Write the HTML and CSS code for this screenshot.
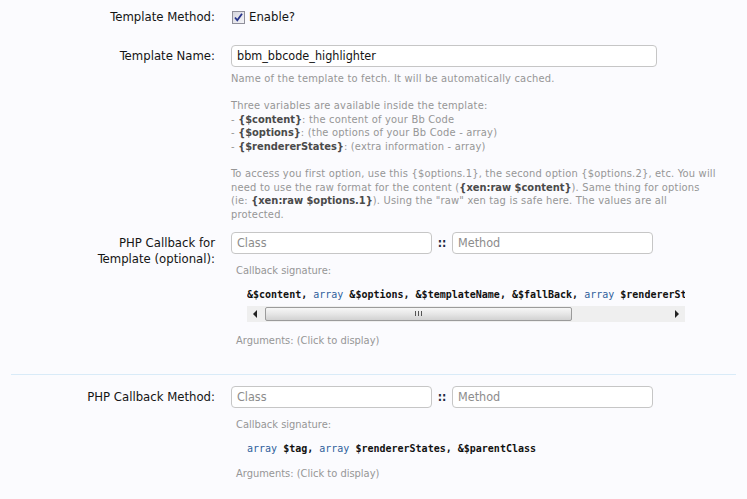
FILE: index.html
```html
<!DOCTYPE html>
<html>
<head>
<meta charset="utf-8">
<link rel="stylesheet" href="styles.css">
</head>
<body>
<form class="form">
  <div class="row row-first">
    <div class="label">Template Method:</div>
    <div class="ctrl">
      <label class="check">
        <span class="box"><svg width="11" height="11" viewBox="0 0 11 11"><path d="M2 5.5 L4.3 8.3 L9 1.8" fill="none" stroke="#27348b" stroke-width="1.8"/></svg></span>
        <span>Enable?</span>
      </label>
    </div>
  </div>

  <div class="row">
    <div class="label pad">Template Name:</div>
    <div class="ctrl">
      <div class="input wide">bbm_bbcode_highlighter</div>
      <p class="help">Name of the template to fetch. It will be automatically cached.<br>
      <br>
      Three variables are available inside the template:<br>
      - <b>{$content}</b>: the content of your Bb Code<br>
      - <b>{$options}</b>: (the options of your Bb Code - array)<br>
      - <b>{$rendererStates}</b>: (extra information - array)<br>
      <br>
      To access you first option, use this {$options.1}, the second option {$options.2}, etc. You will<br>
      need to use the raw format for the content (<b>{xen:raw $content}</b>). Same thing for options<br>
      (ie: <b>{xen:raw $options.1}</b>). Using the "raw" xen tag is safe here. The values are all<br>
      protected.</p>
    </div>
  </div>

  <div class="row row-cb">
    <div class="label pad">PHP Callback for<br>Template (optional):</div>
    <div class="ctrl">
      <div class="pair">
        <div class="input half ph">Class</div>
        <span class="sep">::</span>
        <div class="input half ph">Method</div>
      </div>
      <div class="sig">Callback signature:</div>
      <div class="code scroll"><span class="line">&amp;$content, <span class="kw">array</span> &amp;$options, &amp;$templateName, &amp;$fallBack, <span class="kw">array</span> $rendererStates</span></div>
      <div class="sbar">
        <span class="arr left"></span>
        <span class="thumb"><span class="grip"></span></span>
        <span class="arr right"></span>
      </div>
      <div class="args after-bar">Arguments: (Click to display)</div>
    </div>
  </div>

  <hr class="divider">

  <div class="row row-last">
    <div class="label pad">PHP Callback Method:</div>
    <div class="ctrl">
      <div class="pair">
        <div class="input half ph">Class</div>
        <span class="sep">::</span>
        <div class="input half ph">Method</div>
      </div>
      <div class="sig">Callback signature:</div>
      <div class="code"><span class="line"><span class="kw">array</span> $tag, <span class="kw">array</span> $rendererStates, &amp;$parentClass</span></div>
      <div class="args">Arguments: (Click to display)</div>
    </div>
  </div>
</form>
</body>
</html>
```

FILE: styles.css
```css
html, body {
  margin: 0;
  padding: 0;
  background: #fbfbfe;
}
body {
  font-family: "DejaVu Sans Condensed", "DejaVu Sans", sans-serif;
  font-size: 13px;
  color: #141414;
  width: 747px;
  height: 499px;
  overflow: hidden;
}
.form {
  margin: 0;
  padding: 0;
}
.row {
  display: flex;
  margin-top: 20px;
}
.row-first {
  margin-top: 9px;
}
.row-cb {
  margin-top: 10px;
}
.row-last {
  margin-top: 11px;
}
.label {
  width: 215px;
  flex: none;
  text-align: right;
  line-height: 16px;
  padding-right: 16px;
  box-sizing: content-box;
}
.label.pad {
  padding-top: 3px;
}
.ctrl {
  flex: 1;
  min-width: 0;
}
.check {
  display: flex;
  align-items: center;
  gap: 4px;
  line-height: 16px;
  padding-left: 1px;
}
.box {
  width: 11px;
  height: 11px;
  border: 1px solid #8f8f9a;
  background: linear-gradient(135deg, #d6d6de, #f4f4f7);
  display: flex;
  align-items: center;
  justify-content: center;
}
.box svg {
  display: block;
}
.input {
  height: 20px;
  border: 1px solid #c6c6c6;
  border-radius: 4px;
  background: #fff;
  line-height: 20px;
  padding: 0 5px;
  box-sizing: content-box;
  color: #141414;
  white-space: nowrap;
  font-size: 12.5px;
}
.input.wide {
  width: 414px;
}
.input.half {
  width: 189px;
}
.input.ph {
  color: #8c8c8c;
}
.pair {
  display: flex;
  align-items: center;
}
.sep {
  width: 20px;
  text-align: center;
  font-weight: bold;
  color: #1f2a44;
  font-size: 12px;
}
.help {
  margin: 5px 0 0 0;
  font-size: 11px;
  line-height: 13.6px;
  color: #969696;
  white-space: nowrap;
  letter-spacing: 0.2px;
}
.help b {
  color: #4a4a4a;
  font-weight: bold;
  letter-spacing: 0;
}
.sig {
  font-size: 11px;
  line-height: 14px;
  color: #969696;
  margin-top: 10px;
  padding-left: 5px;
}
.code {
  margin-top: 10px;
  margin-left: 16px;
  font-family: "DejaVu Sans Mono", monospace;
  font-size: 10px;
  line-height: 14px;
  color: #111;
  font-weight: bold;
  white-space: pre;
}
.code.scroll {
  width: 438px;
  overflow: hidden;
}
.kw {
  color: #2f5f9c;
  font-weight: normal;
}
.sbar {
  margin-top: 4px;
  margin-left: 16px;
  width: 438px;
  height: 16px;
  background: #efefef;
  display: flex;
  align-items: center;
  position: relative;
}
.arr {
  width: 18px;
  height: 16px;
  position: relative;
  flex: none;
}
.arr::after {
  content: "";
  position: absolute;
  top: 4px;
  border-top: 4px solid transparent;
  border-bottom: 4px solid transparent;
}
.arr.left::after {
  left: 6px;
  border-right: 4px solid #222;
}
.arr.right {
  margin-left: auto;
}
.arr.right::after {
  left: 8px;
  border-left: 4px solid #222;
}
.thumb {
  width: 305px;
  height: 12px;
  border: 1px solid #9b9b9b;
  border-radius: 2px;
  background: linear-gradient(#f7f7f7, #e6e6e6 50%, #d2d2d2);
  display: flex;
  align-items: center;
  justify-content: center;
}
.grip {
  width: 7px;
  height: 5px;
  background: repeating-linear-gradient(90deg, #555 0 1px, transparent 1px 3px);
}
.args {
  font-size: 11px;
  line-height: 14px;
  color: #969696;
  margin-top: 11px;
  padding-left: 5px;
}
.args.after-bar {
  margin-top: 12px;
}
.divider {
  border: 0;
  border-top: 1px solid #d9ebf8;
  margin: 26px 11px 0 11px;
  height: 0;
}
```
